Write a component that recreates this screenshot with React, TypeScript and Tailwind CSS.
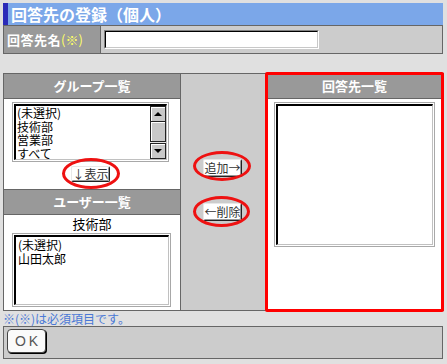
export default function App() {
  const listFrame =
    "border border-[#a8a8a8] p-[1px] bg-white";
  const listInner =
    "h-full bg-white overflow-hidden border-t-2 border-l-2 border-t-black border-l-black border-r border-b border-r-[#c0c0c0] border-b-[#c0c0c0]";
  const btn =
    "h-full w-full bg-white rounded-[2px] border border-t-[#e8e8e8] border-l-[#e8e8e8] border-r-[#222] border-b-[#222] shadow-[inset_-1px_-1px_0_#999] text-[12px] leading-[14px] text-[#333] flex items-center justify-center whitespace-nowrap";
  const ring =
    "absolute rounded-[50%] border-[3px] border-[#ee1111] pointer-events-none";
  return (
    <div className="w-[447px] h-[364px] bg-[#e0e0e0] pt-[3px] pl-[3px] font-['Noto_Sans_CJK_JP','Noto_Sans',sans-serif] overflow-hidden">
      {/* title */}
      <div className="flex h-[22px] w-[440px]">
        <div className="w-[5px] bg-[#2b2bb8]" />
        <div className="flex-1 bg-[#7ba7e9] pl-[3px] text-white text-[16px] leading-[22px] font-bold">
          回答先の登録（個人）
        </div>
      </div>
      {/* name row */}
      <div className="flex h-[29px] w-[440px] border border-[#666]">
        <div className="w-[97px] bg-[#999] border-r border-[#666] flex items-center pl-[3px] text-white font-bold text-[13px] tracking-[0.5px]">
          回答先名<span className="text-[#ffff66] font-normal tracking-normal">(※)</span>
        </div>
        <div className="flex-1 bg-[#ccc] flex items-center pl-[3px]">
          <div className="w-[215px] h-[19px] border border-t-[#808080] border-l-[#808080] border-r-white border-b-white">
            <div className="h-full bg-white border border-t-black border-l-black border-r-[#c8c8c8] border-b-[#c8c8c8]" />
          </div>
        </div>
      </div>
      {/* main table */}
      <div className="mt-[19px] flex w-[441px] h-[238px]">
        {/* left */}
        <div className="w-[177px] border-l border-t border-b border-[#666] bg-white flex flex-col">
          <div className="h-[25px] bg-[#999] border-b border-[#666] text-white font-bold text-[13px] leading-[24px] text-center">
            グループ一覧
          </div>
          <div className={`ml-[8px] mt-[3px] w-[157px] h-[60px] ${listFrame}`}>
            <div className={`${listInner} flex`}>
              <div className="flex-1 pl-[1px] text-[12px] leading-[13.5px] text-black">
                <div className="h-[13.5px]">(未選択)</div>
                <div className="h-[13.5px]">技術部</div>
                <div className="h-[13.5px]">営業部</div>
                <div className="h-[13.5px]">すべて</div>
              </div>
              <div className="w-[16px] flex flex-col">
                <div className="h-[16px] bg-[#c8c8c8] border border-[#222] shadow-[inset_1px_1px_0_#fff] flex items-center justify-center">
                  <div className="w-0 h-0 border-l-[4px] border-r-[4px] border-b-[4px] border-l-transparent border-r-transparent border-b-black" />
                </div>
                <div className="h-[20px] bg-[#c8c8c8] border border-[#222] border-t-0 shadow-[inset_1px_1px_0_#fff]" />
                <div className="flex-1 bg-[#e4e4e4]" />
                <div className="h-[16px] bg-[#c8c8c8] border border-[#222] shadow-[inset_1px_1px_0_#fff] flex items-center justify-center">
                  <div className="w-0 h-0 border-l-[4px] border-r-[4px] border-t-[4px] border-l-transparent border-r-transparent border-t-black" />
                </div>
              </div>
            </div>
          </div>
          <div className="relative ml-[67px] mt-[4px] w-[39px] h-[16px]">
            <div className={btn}>↓表示</div>
            <div className={`${ring} -left-[9px] -right-[10px] -top-[8px] -bottom-[7px]`} />
          </div>
          <div className="mt-[7px] h-[26px] bg-[#999] border-y border-[#666] text-white font-bold text-[13px] leading-[24px] text-center">
            ユーザー一覧
          </div>
          <div className="h-[18px] text-[13px] leading-[18px] text-center text-black">技術部</div>
          <div className={`ml-[8px] w-[159px] h-[74px] ${listFrame}`}>
            <div className={`${listInner} pl-[2px] pt-[1px] text-[12px] leading-[14px] text-black`}>
              <div className="h-[14px]">(未選択)</div>
              <div className="h-[14px]">山田太郎</div>
            </div>
          </div>
        </div>
        {/* middle */}
        <div className="w-[85px] border-l border-t border-b border-[#666] bg-[#ccc] flex flex-col pt-[85px] pl-[22px]">
          <div className="relative w-[39px] h-[18px]">
            <div className={btn}>追加→</div>
            <div className={`${ring} -left-[10px] -right-[9px] -top-[8px] -bottom-[4px]`} />
          </div>
          <div className="relative mt-[26px] w-[39px] h-[18px]">
            <div className={btn}>←削除</div>
            <div className={`${ring} -left-[10px] -right-[8px] -top-[7px] -bottom-[6px]`} />
          </div>
        </div>
        {/* right */}
        <div className="relative w-[179px] border border-[#666] bg-white flex flex-col">
          <div className="h-[25px] bg-[#999] border-b border-[#666] text-white font-bold text-[13px] leading-[24px] text-center">
            回答先一覧
          </div>
          <div className={`ml-[8px] mt-[3px] w-[161px] h-[145px] ${listFrame}`}>
            <div className={listInner} />
          </div>
          <div className="absolute -left-[1px] -top-[2px] -right-[1px] -bottom-[2px] border-[3px] border-[#ff0000] rounded-[2px] pointer-events-none" />
        </div>
      </div>
      {/* note */}
      <div className="h-[15px] text-[12px] leading-[15px] text-[#4a78d6]">※(※)は必須項目です。</div>
      {/* footer */}
      <div className="w-[440px] h-[33px] border border-[#666] bg-[#ccc] pl-[3px] pt-[2px]">
        <div className="w-[39px] h-[24px] rounded-[4px] border border-[#444] bg-[#fafafa] shadow-[1px_1px_0_#000] flex items-center justify-center text-[14px] text-[#555] tracking-[3px] pl-[3px] font-['Liberation_Sans',sans-serif]">
          OK
        </div>
      </div>
    </div>
  );
}
